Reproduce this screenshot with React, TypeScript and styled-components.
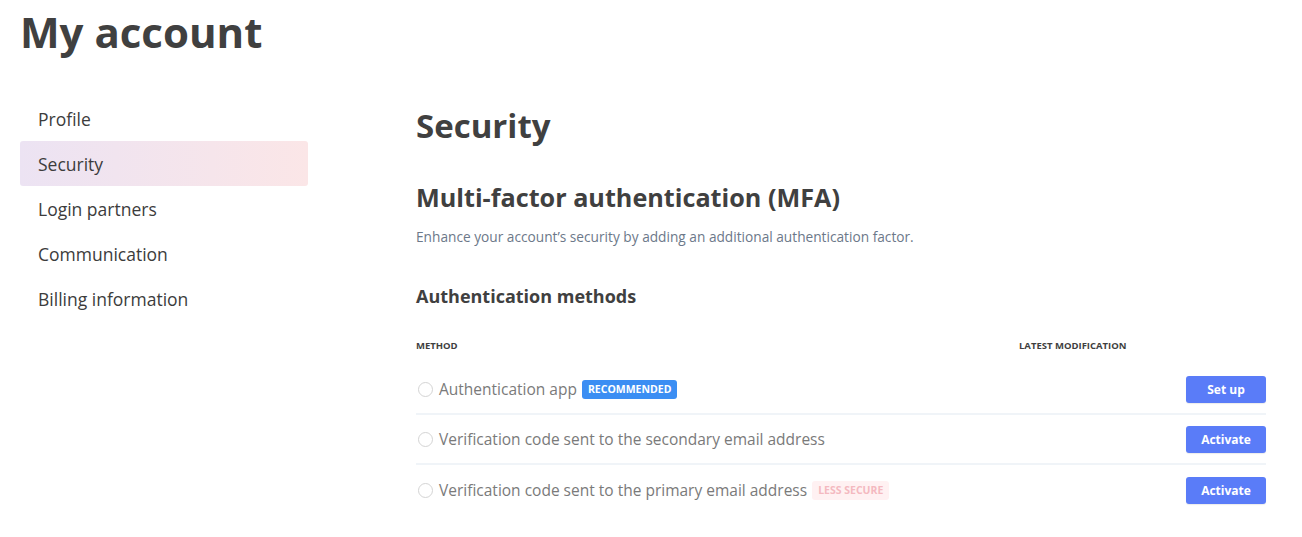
import React from "react";
import styled, { createGlobalStyle } from "styled-components";

const Global = createGlobalStyle`
  html, body { margin: 0; padding: 0; background: #fff; }
  body { font-family: "Open Sans", "Lato", sans-serif; color: #404040; }
  * { box-sizing: border-box; }
`;

const Page = styled.div`
  width: 1302px;
  height: 537px;
  padding: 0 36px 0 20px;
  overflow: hidden;
`;

const Title = styled.h1`
  margin: 0;
  padding-top: 6px;
  height: 58px;
  font-size: 42px;
  line-height: 52px;
  font-weight: 700;
  color: #404040;
  letter-spacing: 0;
`;

const Layout = styled.div`
  display: grid;
  grid-template-columns: 288px 1fr;
  column-gap: 108px;
  padding-top: 38px;
`;

const Nav = styled.nav`
  display: flex;
  flex-direction: column;
`;

const NavItem = styled.div<{ $active?: boolean }>`
  height: 45px;
  display: flex;
  align-items: center;
  padding-left: 18px;
  font-size: 17.5px;
  color: #3c3c3c;
  border-radius: 3px;
  background: ${(p) =>
    p.$active ? "linear-gradient(90deg, #ece3f3 0%, #fbe6e7 100%)" : "transparent"};
`;

const Main = styled.main`
  display: flex;
  flex-direction: column;
`;

const H2 = styled.h2`
  margin: 5px 0 0;
  height: 50px;
  font-size: 33px;
  line-height: 50px;
  font-weight: 700;
  color: #404040;
`;

const H3 = styled.h3`
  margin: 30px 0 0;
  height: 32px;
  font-size: 25.2px;
  line-height: 32px;
  font-weight: 700;
  color: #404040;
`;

const Desc = styled.p`
  margin: 16px 0 0;
  font-size: 13.7px;
  line-height: 16px;
  color: #6c7889;
`;

const H4 = styled.h4`
  margin: 39px 0 0;
  font-size: 18px;
  line-height: 24px;
  font-weight: 700;
  color: #404040;
`;

const Table = styled.div`
  margin-top: 25px;
  display: flex;
  flex-direction: column;
`;

const HeadRow = styled.div`
  display: grid;
  grid-template-columns: 603px 1fr;
  height: 24px;
  align-items: center;
  font-size: 9.5px;
  font-weight: 700;
  letter-spacing: 0;
  color: #3f3f3f;
  text-transform: uppercase;
  margin-bottom: 8px;
`;

const Row = styled.div<{ $last?: boolean }>`
  height: 50px;
  display: flex;
  align-items: center;
  border-bottom: ${(p) => (p.$last ? "none" : "2px solid #f0f4f8")};
`;

const Radio = styled.span`
  width: 15px;
  height: 15px;
  border-radius: 50%;
  border: 1px solid #d4d4d4;
  margin: 0 6px 0 2px;
  flex: none;
`;

const Label = styled.span`
  font-size: 15.5px;
  color: #7a7a7a;
`;

const Badge = styled.span<{ $tone: "blue" | "pink" }>`
  margin-left: 5px;
  height: 19px;
  padding: 0 6px;
  display: inline-flex;
  align-items: center;
  border-radius: 3px;
  font-size: 10.5px;
  font-weight: 700;
  letter-spacing: 0;
  background: ${(p) => (p.$tone === "blue" ? "#3b8ef3" : "#fff1f2")};
  color: ${(p) => (p.$tone === "blue" ? "#ffffff" : "#f4b9c0")};
`;

const Spacer = styled.div`
  flex: 1;
`;

const Button = styled.button`
  width: 80px;
  height: 27px;
  border: none;
  border-radius: 3px;
  background: #5a7cf8;
  color: #fff;
  font-family: inherit;
  font-size: 12px;
  font-weight: 700;
  box-shadow: 0 1px 1px rgba(0, 0, 0, 0.08);
`;

const methods = [
  { label: "Authentication app", badge: { text: "RECOMMENDED", tone: "blue" as const }, action: "Set up" },
  { label: "Verification code sent to the secondary email address", action: "Activate" },
  { label: "Verification code sent to the primary email address", badge: { text: "LESS SECURE", tone: "pink" as const }, action: "Activate" },
];

export default function App() {
  return (
    <Page>
      <Global />
      <Title>My account</Title>
      <Layout>
        <Nav>
          <NavItem>Profile</NavItem>
          <NavItem $active>Security</NavItem>
          <NavItem>Login partners</NavItem>
          <NavItem>Communication</NavItem>
          <NavItem>Billing information</NavItem>
        </Nav>
        <Main>
          <H2>Security</H2>
          <H3>Multi-factor authentication (MFA)</H3>
          <Desc>Enhance your account’s security by adding an additional authentication factor.</Desc>
          <H4>Authentication methods</H4>
          <Table>
            <HeadRow>
              <span>Method</span>
              <span>Latest modification</span>
            </HeadRow>
            {methods.map((m, i) => (
              <Row key={i} $last={i === methods.length - 1}>
                <Radio />
                <Label>{m.label}</Label>
                {m.badge && <Badge $tone={m.badge.tone}>{m.badge.text}</Badge>}
                <Spacer />
                <Button>{m.action}</Button>
              </Row>
            ))}
          </Table>
        </Main>
      </Layout>
    </Page>
  );
}
